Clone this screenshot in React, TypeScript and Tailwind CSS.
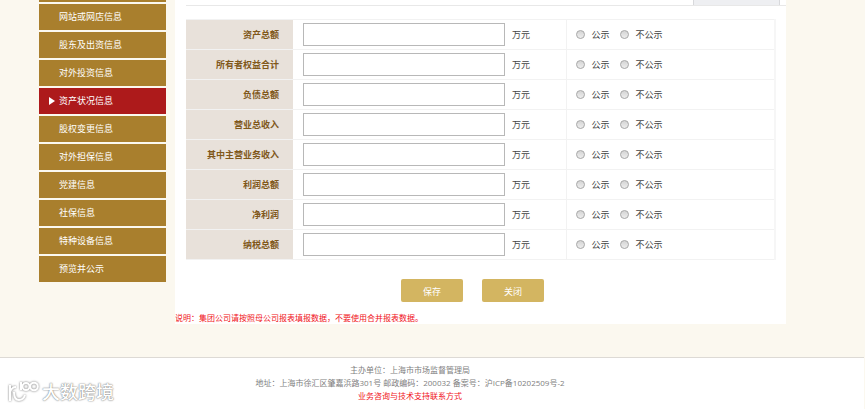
import clsx from "clsx";

interface MenuItem {
  label: string;
  active?: boolean;
}

const menuItems: MenuItem[] = [
  { label: "网站或网店信息" },
  { label: "股东及出资信息" },
  { label: "对外投资信息" },
  { label: "资产状况信息", active: true },
  { label: "股权变更信息" },
  { label: "对外担保信息" },
  { label: "党建信息" },
  { label: "社保信息" },
  { label: "特种设备信息" },
  { label: "预览并公示" },
];

const fields = [
  { id: "totalAssets", label: "资产总额" },
  { id: "ownersEquity", label: "所有者权益合计" },
  { id: "totalLiabilities", label: "负债总额" },
  { id: "revenue", label: "营业总收入" },
  { id: "mainRevenue", label: "其中主营业务收入" },
  { id: "totalProfit", label: "利润总额" },
  { id: "netProfit", label: "净利润" },
  { id: "totalTax", label: "纳税总额" },
];

const Sidebar = () => (
  <nav className="w-[127px] shrink-0">
    <div className="h-0.5 bg-[#a97f2d]" />
    <ul className="mt-0.5 flex flex-col gap-0.5">
      {menuItems.map(({ label, active }) => (
        <li key={label}>
          <a
            href="#"
            className={clsx(
              "flex h-[26px] items-center pl-2.5 text-[9px] text-white",
              active ? "bg-[#ad1a1b]" : "bg-[#a97f2d]"
            )}
          >
            <span className="flex w-2.5 shrink-0">
              {active && (
                <svg viewBox="0 0 6 8" className="h-2 w-1.5 fill-white">
                  <path d="M0 0L6 4L0 8Z" />
                </svg>
              )}
            </span>
            {label}
          </a>
        </li>
      ))}
    </ul>
  </nav>
);

interface PublishRadioProps {
  name: string;
  value: string;
  label: string;
}

const PublishRadio = ({ name, value, label }: PublishRadioProps) => (
  <label className="flex items-center gap-[7px]">
    <input
      type="radio"
      name={name}
      value={value}
      className="size-[9px] appearance-none rounded-full border border-[#aaaaaa] bg-linear-to-b from-[#d4d4d4] to-[#eeeeee] checked:bg-[#777777]"
    />
    {label}
  </label>
);

const AssetTable = () => (
  <table className="w-full table-fixed border-collapse text-[9px] text-[#444444]">
    <colgroup>
      <col className="w-[107px]" />
      <col className="w-[273px]" />
      <col />
    </colgroup>
    <tbody>
      {fields.map(({ id, label }) => (
        <tr key={id} className="h-[30px] border-y border-[#f2f2f2]">
          <th className="bg-[#e8e1da] p-0 pr-3.5 text-right font-bold text-[#80581a]">
            <label htmlFor={id}>{label}</label>
          </th>
          <td className="border-r border-[#f2f2f2] p-0 pl-2.5">
            <div className="flex items-center gap-[7px]">
              <input
                id={id}
                type="text"
                className="h-[23px] w-[202px] border border-[#b8b8b8] bg-white px-1 outline-none"
              />
              <span>万元</span>
            </div>
          </td>
          <td className="border-r-2 border-[#f6f6f6] p-0 pl-[9px]">
            <div className="flex items-center gap-2.5">
              <PublishRadio name={`${id}Publish`} value="yes" label="公示" />
              <PublishRadio name={`${id}Publish`} value="no" label="不公示" />
            </div>
          </td>
        </tr>
      ))}
    </tbody>
  </table>
);

const ActionButton = ({ children }: { children: string }) => (
  <button
    type="button"
    className="h-[23px] w-[62px] rounded-xs bg-[#d3b561] pt-0.5 text-[9px] text-white"
  >
    {children}
  </button>
);

const Watermark = () => (
  <div className="absolute bottom-1.5 left-2 flex items-center gap-0.5">
    <svg
      viewBox="0 0 32 22"
      className="h-[22px] w-8 overflow-visible fill-none stroke-white drop-shadow-[0_0_1px_#777777]"
      strokeWidth="2"
    >
      <path d="M2 4V20" />
      <path d="M2 11C3 8 5 6 8 6" />
      <path d="M6 11C6 16 8 19 11 19C14 19 16 17 17 14" />
      <path d="M13 1V9" />
      <circle cx="18" cy="5.5" r="3.5" />
      <circle cx="26" cy="5.5" r="3.8" />
    </svg>
    <span className="text-lg leading-5 font-medium text-white [text-shadow:0_0_1px_#777777,0_0_2px_#999999]">
      大数跨境
    </span>
  </div>
);

const Footer = () => (
  <footer className="relative mr-px border-t border-[#dddad5] bg-white pt-[5px] pr-[44px] pb-1.5 text-center text-[8px] leading-[13px] text-[#808080]">
    <p>主办单位：上海市市场监督管理局</p>
    <p>地址：上海市徐汇区肇嘉浜路301号 邮政编码：200032 备案号：沪ICP备10202509号-2</p>
    <a href="#" className="block text-[#f01020]">
      业务咨询与技术支持联系方式
    </a>
    <Watermark />
  </footer>
);

const App = () => (
  <div className="flex min-h-screen flex-col bg-[#fbf8ef] font-['Open_Sans','Noto_Sans_CJK_SC',sans-serif]">
    <div className="flex gap-[9px] pr-[79px] pb-[33px] pl-[39px]">
      <Sidebar />
      <main className="min-w-0 flex-1 bg-white">
        <div className="ml-[11px] flex h-1.5 justify-end border-b border-[#e8e8e8] pr-1.5">
          <div className="w-[87px] border-x border-[#d8d9dc] bg-[#eeeff2]" />
        </div>
        <form>
          <div className="pt-[13px] pr-2.5 pl-[11px]">
            <AssetTable />
          </div>
          <div className="mt-[19px] flex justify-center gap-[19px] pr-4">
            <ActionButton>保存</ActionButton>
            <ActionButton>关闭</ActionButton>
          </div>
        </form>
        <p className="mt-2.5 text-[8px] leading-3 text-[#f01020]">
          说明：集团公司请按照母公司报表填报数据，不要使用合并报表数据。
        </p>
      </main>
    </div>
    <div className="flex flex-1 flex-col *:flex-1">
      <Footer />
    </div>
  </div>
);

export default App;
